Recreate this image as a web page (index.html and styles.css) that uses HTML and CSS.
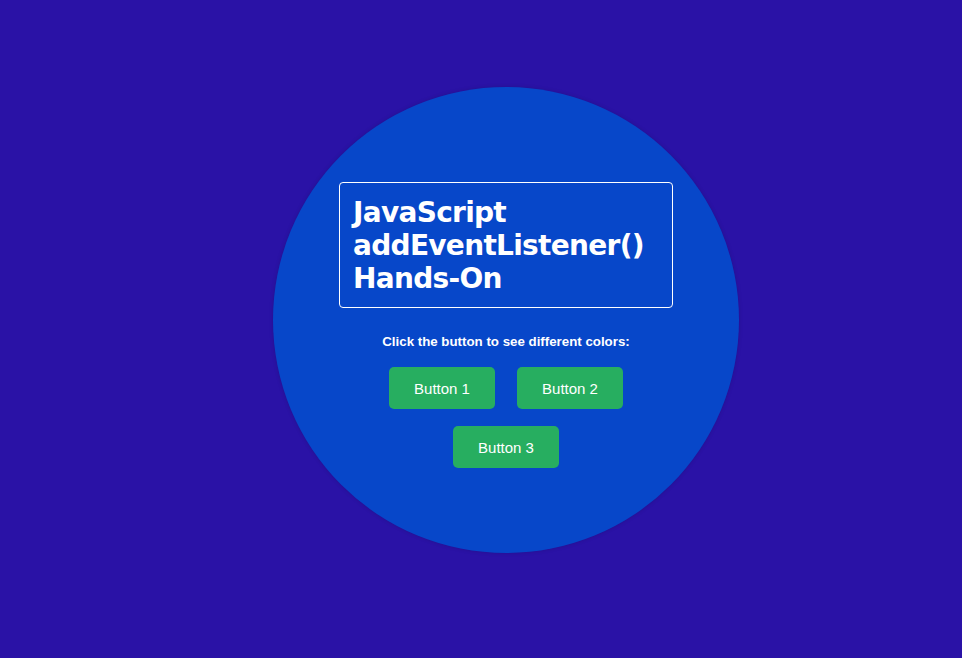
FILE: index.html
```html
<!DOCTYPE html>
<html>
<head>
<meta charset="utf-8">
<title>addEventListener</title>
<link rel="stylesheet" href="styles.css">
</head>
<body>
<div class="stage">
  <div class="circle">
    <div class="title-box">
      <h1 class="title">JavaScript addEventListener() Hands-On</h1>
    </div>
    <p class="hint">Click the button to see different colors:</p>
    <div class="buttons">
      <button class="btn">Button 1</button>
      <button class="btn">Button 2</button>
      <button class="btn">Button 3</button>
    </div>
  </div>
</div>
</body>
</html>
```
FILE: styles.css
```css
html, body {
  margin: 0;
  padding: 0;
}
body {
  background: #2a12a6;
  font-family: "Liberation Sans", Arial, sans-serif;
  color: #ffffff;
  width: 962px;
  height: 658px;
  overflow: hidden;
}
.stage {
  padding: 87px 0 0 273px;
}
.circle {
  width: 466px;
  height: 466px;
  border-radius: 50%;
  background: #0747c9;
  box-shadow: 0 0 4px rgba(0, 0, 0, 0.15);
  box-sizing: border-box;
  padding-top: 95px;
  display: flex;
  flex-direction: column;
  align-items: center;
}
.title-box {
  width: 334px;
  box-sizing: border-box;
  border: 1px solid #ffffff;
  border-radius: 4px;
  padding: 13px 13px 12px;
}
.title {
  margin: 0;
  font-family: "DejaVu Sans", Verdana, sans-serif;
  font-weight: bold;
  font-size: 28px;
  letter-spacing: -0.7px;
  line-height: 33px;
  color: #ffffff;
}
.hint {
  margin: 26px 0 0;
  font-size: 13.3px;
  font-weight: bold;
  line-height: 16px;
}
.buttons {
  width: 234px;
  margin-top: 17px;
  display: flex;
  flex-wrap: wrap;
  justify-content: center;
  gap: 17px 22px;
}
.btn {
  width: 106px;
  height: 42px;
  border: none;
  border-radius: 5px;
  background: #27ae60;
  color: #ffffff;
  font-family: "Liberation Sans", Arial, sans-serif;
  font-size: 15px;
  padding: 0;
  cursor: pointer;
}
```
